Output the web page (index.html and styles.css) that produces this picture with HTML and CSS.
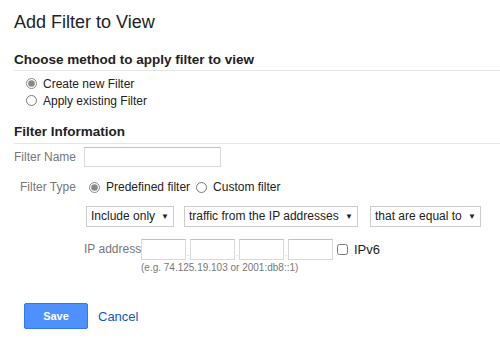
FILE: index.html
```html
<!DOCTYPE html>
<html lang="en">
<head>
  <meta charset="UTF-8">
  <title>Add Filter to View</title>
  <link rel="stylesheet" href="styles.css">
</head>
<body>
  <h1 class="title">Add Filter to View</h1>

  <h2 class="section first">Choose method to apply filter to view</h2>
  <div class="choices">
    <label class="radio"><input type="radio" name="method" checked> Create new Filter</label>
    <label class="radio"><input type="radio" name="method"> Apply existing Filter</label>
  </div>

  <h2 class="section">Filter Information</h2>
  <div class="row name-row">
    <span class="label">Filter Name</span>
    <input type="text" class="text-input name-input">
  </div>

  <div class="row type-row">
    <span class="label type-label">Filter Type</span>
    <label class="radio inline"><input type="radio" name="ftype" checked> Predefined filter</label>
    <label class="radio inline"><input type="radio" name="ftype"> Custom filter</label>
  </div>

  <div class="selects">
    <div class="select sel-1">Include only <span class="caret">&#9660;</span></div>
    <div class="select sel-2">traffic from the IP addresses <span class="caret">&#9660;</span></div>
    <div class="select sel-3">that are equal to <span class="caret">&#9660;</span></div>
  </div>

  <div class="ip-row">
    <span class="ip-label">IP address</span>
    <div class="ip-fields">
      <div class="octets">
        <input type="text" class="octet"><span class="dot">.</span>
        <input type="text" class="octet"><span class="dot">.</span>
        <input type="text" class="octet"><span class="dot">.</span>
        <input type="text" class="octet">
        <label class="check"><input type="checkbox"> IPv6</label>
      </div>
      <div class="hint">(e.g. 74.125.19.103 or 2001:db8::1)</div>
    </div>
  </div>

  <div class="actions">
    <button type="button" class="save-button">Save</button>
    <a href="#" class="cancel-link">Cancel</a>
  </div>
</body>
</html>
```

FILE: styles.css
```css
body {
  font-family: "Liberation Sans", Arial, sans-serif;
  margin: 0;
  padding: 0 0 0 14px;
  background: #fff;
  color: #222;
  font-size: 12px;
}

.title {
  font-size: 18px;
  font-weight: normal;
  margin: 0;
  padding-top: 10px;
  height: 34px;
  line-height: 24px;
}

.section {
  font-size: 13.5px;
  font-weight: bold;
  margin: 0;
  padding: 8px 0 3px;
  border-bottom: 1px solid #e5e5e5;
  line-height: 16px;
}

.section.first {
  padding-bottom: 2px;
}

.choices {
  padding: 4px 0 0 12px;
  height: 41px;
}

.radio {
  display: flex;
  align-items: center;
  height: 17px;
  color: #222;
}

.radio input {
  margin: 0 6px 0 0;
  width: 11px;
  height: 11px;
  accent-color: #888;
}

.radio.inline {
  display: inline-flex;
  margin-right: 6px;
}

.row {
  display: flex;
  align-items: center;
}

.label {
  color: #777;
  width: 70px;
}

.name-row {
  margin-top: 3px;
}

.text-input {
  border: 1px solid #d9d9d9;
  border-top-color: #c0c0c0;
  height: 20px;
  box-sizing: border-box;
  padding: 0 4px;
}

.name-input {
  width: 137px;
}

.type-row {
  margin-top: 10px;
  height: 20px;
}

.type-label {
  padding-left: 6px;
  width: 69px;
}

.selects {
  display: flex;
  margin: 9px 0 0 72px;
}

.select {
  border: 1px solid #ccc;
  height: 21px;
  box-sizing: border-box;
  line-height: 19px;
  padding: 0 4px;
  color: #222;
  white-space: nowrap;
  display: flex;
  justify-content: space-between;
}

.caret {
  font-size: 8px;
}

.sel-1 { width: 88px; }
.sel-2 { width: 174px; margin-left: 10px; }
.sel-3 { width: 111px; margin-left: 12px; }

.ip-row {
  display: flex;
  margin: 12px 0 0 70px;
}

.ip-label {
  color: #777;
  line-height: 21px;
  width: 57px;
  white-space: nowrap;
}

.octets {
  display: flex;
  align-items: center;
}

.octet {
  width: 45px;
  height: 21px;
  box-sizing: border-box;
  border: 1px solid #d9d9d9;
  border-top-color: #c0c0c0;
  margin: 0;
}

.dot {
  color: #aaa;
  width: 4px;
  font-size: 8px;
  text-align: center;
  padding-top: 8px;
}

.check {
  display: flex;
  align-items: center;
  margin-left: 4px;
  font-size: 13px;
}

.check input {
  margin: 0 6px 0 0;
  width: 11px;
  height: 11px;
}

.hint {
  color: #777;
  font-size: 10px;
  margin-top: 2px;
}

.actions {
  display: flex;
  align-items: center;
  margin: 30px 0 0 10px;
  gap: 10px;
}

.save-button {
  background-color: #4d90fe;
  border: 1px solid #3079ed;
  border-radius: 2px;
  color: #fff;
  font-family: "Liberation Sans", Arial, sans-serif;
  font-weight: bold;
  font-size: 11px;
  width: 64px;
  height: 26px;
  cursor: pointer;
}

.cancel-link {
  color: #15c;
  text-decoration: none;
  font-size: 13px;
}
```
